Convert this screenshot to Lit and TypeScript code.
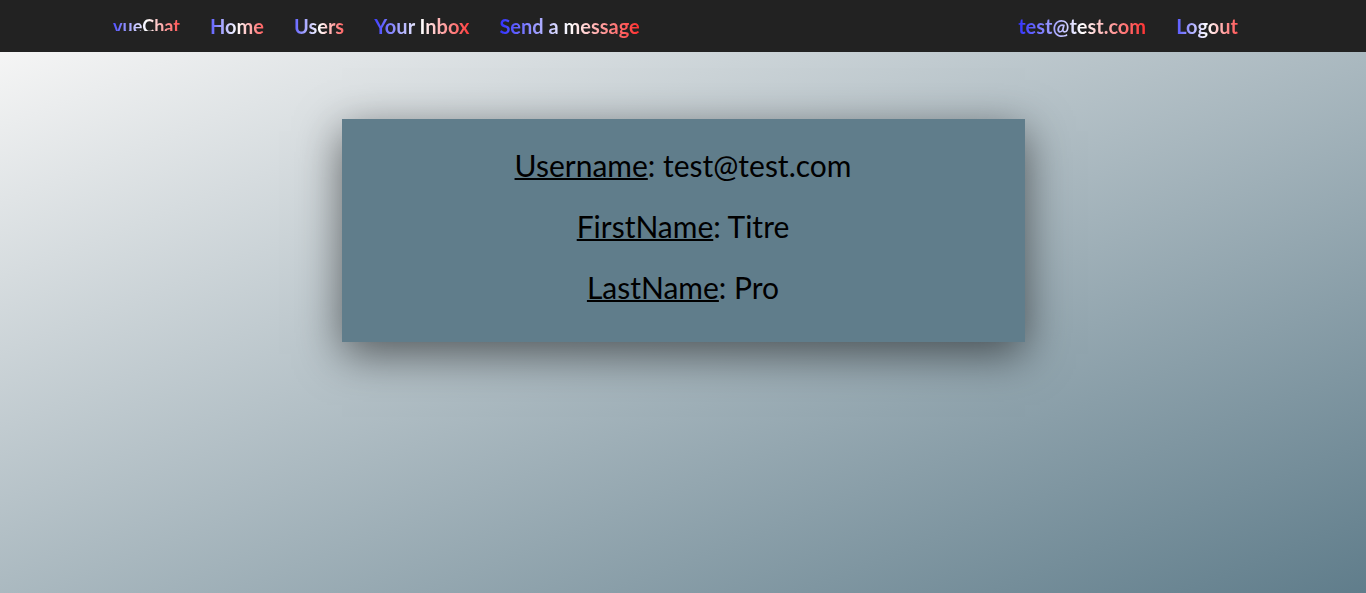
import { LitElement, html, css } from "lit";
import { customElement } from "lit/decorators.js";

interface Field {
  label: string;
  value: string;
}

const MAIN_LINKS = ["Home", "Users", "Your Inbox", "Send a message"];
const ACCOUNT_LINKS = ["test@test.com", "Logout"];
const PROFILE: Field[] = [
  { label: "Username", value: "test@test.com" },
  { label: "FirstName", value: "Titre" },
  { label: "LastName", value: "Pro" },
];

@customElement("nav-bar")
class NavBar extends LitElement {
  static styles = css`
    :host {
      display: block;
      background: #222;
    }
    .container {
      display: flex;
      justify-content: space-between;
      box-sizing: border-box;
      max-width: 1170px;
      margin: 0 auto;
      padding: 12px 15px 12px 0;
    }
    .group {
      display: flex;
      align-items: flex-start;
    }
    .link {
      padding: 0 15px;
      background: linear-gradient(to right, blue, white, red);
      -webkit-background-clip: text;
      background-clip: text;
      color: transparent;
      font-size: 20px;
      font-weight: 700;
      line-height: 28px;
      text-decoration: none;
      white-space: nowrap;
    }
    .brand {
      height: 12px;
      margin-top: 7px;
      font-size: 18px;
      line-height: 15px;
    }
  `;

  render() {
    return html`
      <nav class="container">
        <div class="group">
          <a class="link brand" href="#">vueChat</a>
          ${MAIN_LINKS.map((t) => html`<a class="link" href="#">${t}</a>`)}
        </div>
        <div class="group">
          ${ACCOUNT_LINKS.map((t) => html`<a class="link" href="#">${t}</a>`)}
        </div>
      </nav>
    `;
  }
}

@customElement("app-root")
class AppRoot extends LitElement {
  static styles = css`
    :host {
      display: flex;
      flex-direction: column;
      min-height: 100vh;
      font-family: Lato, sans-serif;
      color: #000;
    }
    .page {
      flex: 1;
      padding: 67px 0;
      background: linear-gradient(to bottom right, #f5f5f5, #607d8b);
    }
    .card {
      box-sizing: border-box;
      width: 50%;
      margin: 0 auto;
      padding: 24px 20px 33px;
      background: #607d8b;
      box-shadow: 0 12px 42px rgba(0, 0, 0, 0.55);
      text-align: center;
    }
    .row {
      margin: 0 0 17px;
      font-size: 30px;
      line-height: 44px;
    }
    .row:last-child {
      margin-bottom: 0;
    }
    .label {
      text-decoration: underline 2px;
    }
  `;

  render() {
    return html`
      <nav-bar></nav-bar>
      <main class="page">
        <section class="card">
          ${PROFILE.map(
            (f) => html`<p class="row"><span class="label">${f.label}</span>: ${f.value}</p>`
          )}
        </section>
      </main>
    `;
  }
}
